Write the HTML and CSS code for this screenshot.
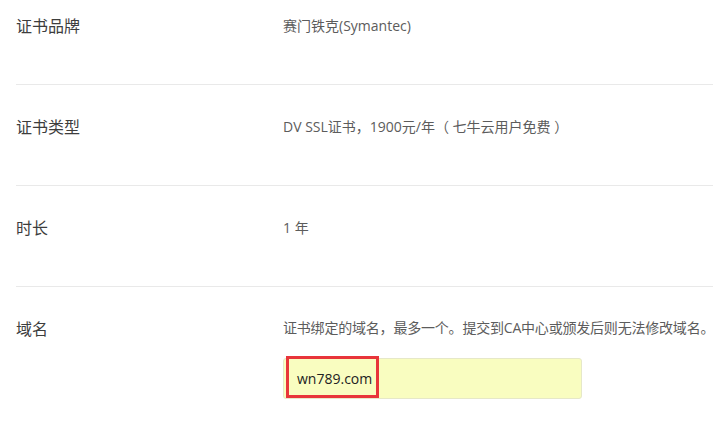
FILE: index.html
```html
<!DOCTYPE html>
<html lang="zh-CN">
<head>
<meta charset="utf-8">
<link rel="stylesheet" href="styles.css">
</head>
<body>
<div class="form">
  <div class="row">
    <div class="label">证书品牌</div>
    <div class="value">赛门铁克(Symantec)</div>
  </div>
  <div class="row">
    <div class="label">证书类型</div>
    <div class="value">DV SSL证书，1900元/年（ 七牛云用户免费 ）</div>
  </div>
  <div class="row">
    <div class="label">时长</div>
    <div class="value">1 年</div>
  </div>
  <div class="row last">
    <div class="label">域名</div>
    <div class="value">
      <div class="hint">证书绑定的域名，最多一个。提交到CA中心或颁发后则无法修改域名。</div>
      <div class="input-wrap">
        <div class="input">wn789.com</div>
        <div class="mark"></div>
      </div>
    </div>
  </div>
</div>
</body>
</html>
```
FILE: styles.css
```css
html, body {
  margin: 0;
  padding: 0;
  background: #fff;
  overflow: hidden;
}
body {
  font-family: "Open Sans", "Noto Sans CJK SC", sans-serif;
  color: #333;
}
.form {
  margin-top: -16px;
  padding-left: 16px;
}
.row {
  display: grid;
  grid-template-columns: 267px 1fr;
  padding: 32px 0 48px;
  border-bottom: 1px solid #e9e9e9;
}
.row.last {
  border-bottom: none;
}
.label {
  font-size: 16px;
  line-height: 20px;
  color: #3d3d3d;
}
.value {
  font-size: 14px;
  line-height: 20px;
  color: #5c5c5c;
  white-space: nowrap;
}
.hint {
  line-height: 18px;
  letter-spacing: -0.2px;
}
.input-wrap {
  position: relative;
  margin-top: 21px;
  width: 299px;
}
.input {
  box-sizing: border-box;
  height: 41px;
  padding: 0 13px;
  background: #f9fdc0;
  border: 1px solid #e6e8c8;
  border-radius: 3px;
  font-size: 14px;
  line-height: 39px;
  color: #222;
}
.mark {
  position: absolute;
  left: 3px;
  top: -2px;
  width: 93px;
  height: 42px;
  box-sizing: border-box;
  border: 3px solid #e8353a;
}
```
